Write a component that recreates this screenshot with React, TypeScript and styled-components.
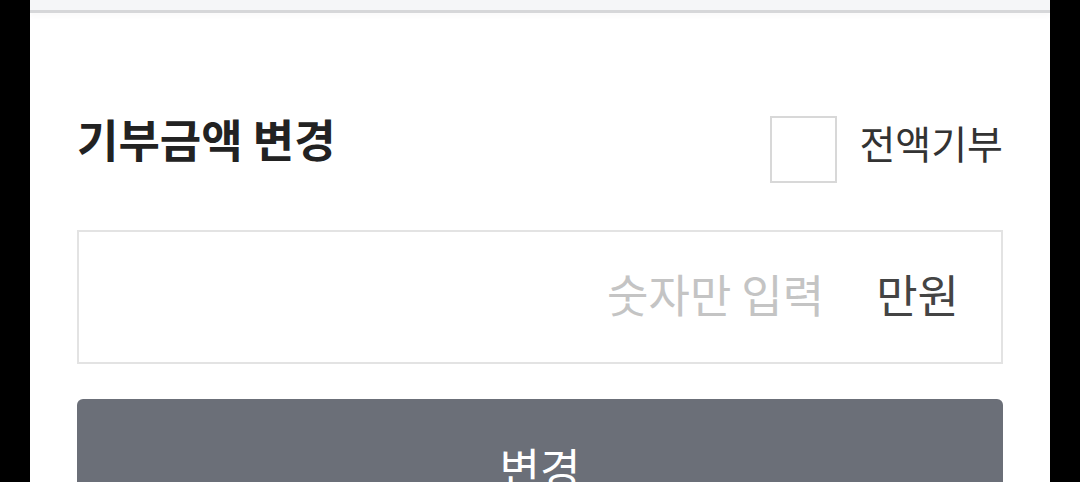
import React, { useState } from 'react';
import styled, { createGlobalStyle } from 'styled-components';

const GlobalStyle = createGlobalStyle`
    html, body {
        margin: 0;
        padding: 0;
        background: #000;
        overflow: hidden;
    }
    body {
        font-family: "Noto Sans CJK KR", "Noto Sans", sans-serif;
    }
`;

const Page = styled.div`
    width: 1020px;
    height: 482px;
    margin: 0 30px;
    background: #fff;
    overflow: hidden;
`;

const TopBar = styled.div`
    height: 10px;
    background: #f5f6f8;
    border-bottom: 3px solid #d6d7d9;
    box-shadow: 0 4px 4px rgba(0, 0, 0, 0.02);
`;

const Content = styled.div`
    padding: 103px 47px 0;
    display: flex;
    flex-direction: column;
`;

const Header = styled.div`
    display: flex;
    justify-content: space-between;
    align-items: center;
    height: 67px;
`;

const Title = styled.h2`
    margin: 0 0 22px;
    font-size: 45px;
    font-weight: 700;
    color: #222;
    line-height: 1;
`;

const CheckLabel = styled.label`
    display: flex;
    align-items: center;
    gap: 22px;
    cursor: pointer;
`;

const CheckBox = styled.span<{ $checked: boolean }>`
    width: 67px;
    height: 67px;
    box-sizing: border-box;
    border: 2px solid #d8d8d8;
    background: ${p => (p.$checked ? '#6b6f78' : '#fff')};
`;

const CheckText = styled.span`
    font-size: 39px;
    color: #333;
    line-height: 1;
    margin-bottom: 14px;
`;

const InputBox = styled.div`
    margin-top: 47px;
    height: 134px;
    box-sizing: border-box;
    border: 2px solid #e3e3e3;
    display: flex;
    align-items: center;
    padding: 0 42px 8px 20px;
    gap: 50px;
`;

const AmountInput = styled.input`
    flex: 1;
    min-width: 0;
    border: none;
    outline: none;
    text-align: right;
    font-family: inherit;
    font-size: 45px;
    color: #333;
    background: transparent;
    &::placeholder {
        color: #c4c4c4;
    }
`;

const Unit = styled.span`
    font-size: 45px;
    color: #444;
`;

const SubmitButton = styled.button`
    margin-top: 35px;
    height: 134px;
    border: none;
    border-radius: 6px;
    background: #6b6f78;
    color: #fff;
    font-family: inherit;
    font-size: 44px;
    line-height: 1;
    display: flex;
    justify-content: center;
    align-items: flex-start;
    padding: 46px 0 0;
`;

export default function App() {
    const [all, setAll] = useState(false);
    const [amount, setAmount] = useState('');

    return (
        <>
            <GlobalStyle />
            <Page>
                <TopBar />
                <Content>
                    <Header>
                        <Title>기부금액 변경</Title>
                        <CheckLabel onClick={() => setAll(!all)}>
                            <CheckBox $checked={all} />
                            <CheckText>전액기부</CheckText>
                        </CheckLabel>
                    </Header>
                    <InputBox>
                        <AmountInput
                            value={amount}
                            onChange={e => setAmount(e.target.value.replace(/[^0-9]/g, ''))}
                            placeholder="숫자만 입력"
                        />
                        <Unit>만원</Unit>
                    </InputBox>
                    <SubmitButton>변경</SubmitButton>
                </Content>
            </Page>
        </>
    );
}
